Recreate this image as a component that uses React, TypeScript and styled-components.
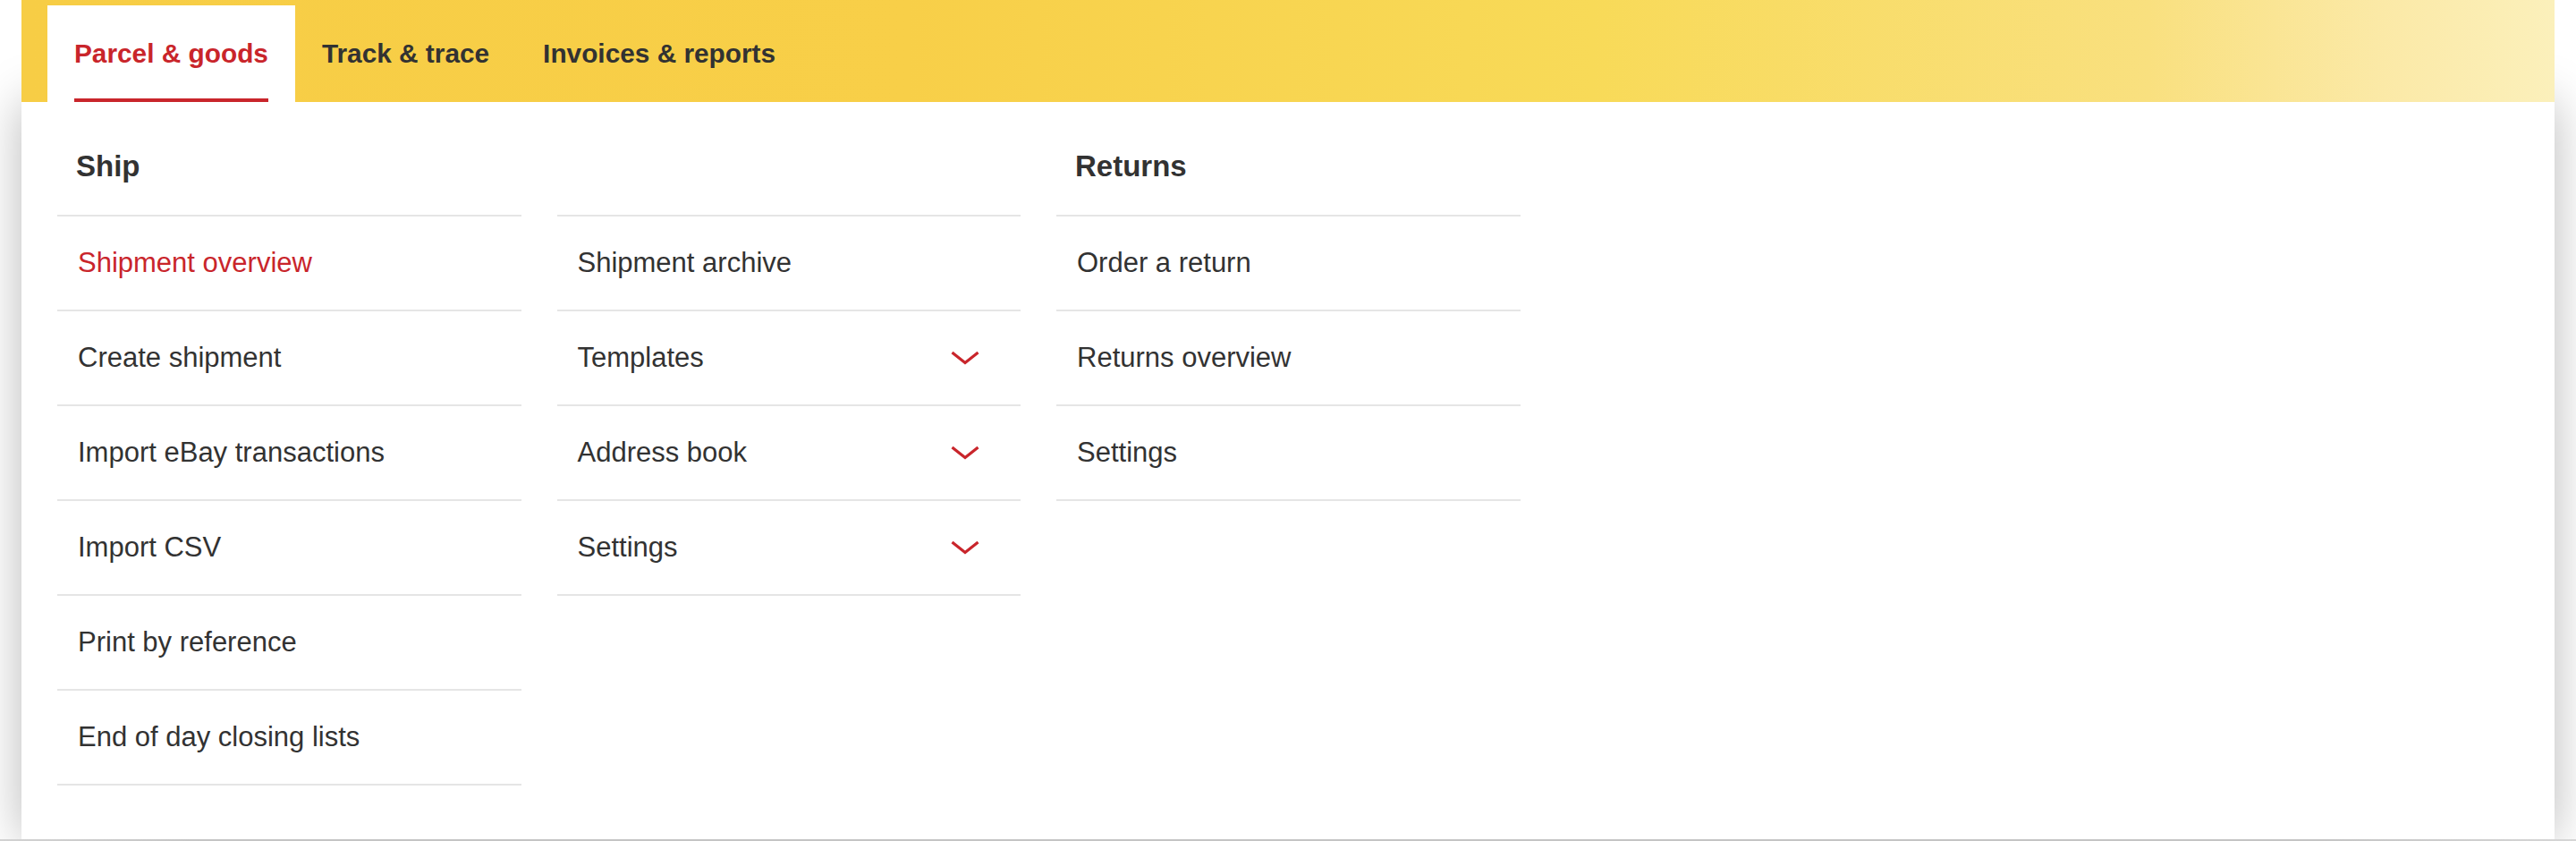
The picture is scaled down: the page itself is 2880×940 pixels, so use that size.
import React from "react";
import styled, { createGlobalStyle } from "styled-components";

const GlobalStyle = createGlobalStyle`
  html, body {
    margin: 0;
    padding: 0;
    background: #ffffff;
    overflow: hidden;
  }
  body {
    font-family: "Liberation Sans", Arial, Helvetica, sans-serif;
    color: #323232;
    -webkit-font-smoothing: antialiased;
  }
  * { box-sizing: border-box; }
`;

const RED = "#c9252b";
const TEXT = "#323232";
const LINE = "#e5e5e5";

const Page = styled.div`
  width: 2880px;
  height: 940px;
  display: flex;
  flex-direction: column;
  background: #ffffff;
`;

const TabBar = styled.nav`
  position: relative;
  z-index: 1;
  margin: 0 24px;
  height: 114px;
  flex: none;
  display: flex;
  align-items: flex-end;
  padding-left: 29px;
  background: linear-gradient(
    90deg,
    #f7cd45 0%,
    #f8cf48 35%,
    #f8da58 62%,
    #f9e07f 84%,
    #fbe9a6 93%,
    #fbf0bb 100%
  );
`;

const Tab = styled.a<{ $active?: boolean }>`
  height: 108px;
  padding: 0 30px;
  display: flex;
  background: ${(p) => (p.$active ? "#ffffff" : "transparent")};
  color: ${(p) => (p.$active ? RED : TEXT)};
  font-size: 29.8px;
  font-weight: 700;
  text-decoration: none;
  white-space: nowrap;
  cursor: pointer;
`;

const TabLabel = styled.span<{ $active?: boolean }>`
  display: flex;
  align-items: center;
  padding-top: 4px;
  border-bottom: 4px solid ${(p) => (p.$active ? RED : "transparent")};
`;

const Panel = styled.section`
  margin: 0 24px;
  height: 824px;
  flex: none;
  background: #ffffff;
  box-shadow: 0 0 52px rgba(0, 0, 0, 0.28);
  display: grid;
  grid-template-columns: repeat(3, 518.5px);
  column-gap: 40px;
  align-content: start;
  padding-left: 40px;
`;

const Column = styled.div`
  display: flex;
  flex-direction: column;
`;

const Heading = styled.h3`
  margin: 0;
  height: 126px;
  padding: 52px 0 0 21px;
  font-size: 33px;
  line-height: 40px;
  font-weight: 700;
  color: ${TEXT};
`;

const List = styled.ul`
  list-style: none;
  margin: 0;
  padding: 0;
  border-bottom: 2px solid ${LINE};
`;

const Item = styled.li<{ $active?: boolean }>`
  height: 106px;
  border-top: 2px solid ${LINE};
  display: flex;
  align-items: center;
  justify-content: space-between;
  padding: 0 46px 0 23px;
  font-size: 31px;
  color: ${(p) => (p.$active ? RED : TEXT)};
  white-space: nowrap;
  cursor: pointer;
`;

const Chevron = styled.svg`
  width: 32px;
  height: 18px;
  flex: none;
`;

const BelowStrip = styled.div`
  height: 2px;
  flex: none;
  background: linear-gradient(90deg, #d2d2d2 0%, #c4c4c4 8%, #c4c4c4 90%, #d6d6d6 100%);
`;

type Entry = { label: string; active?: boolean; expandable?: boolean };

const columns: { heading: string; items: Entry[] }[] = [
  {
    heading: "Ship",
    items: [
      { label: "Shipment overview", active: true },
      { label: "Create shipment" },
      { label: "Import eBay transactions" },
      { label: "Import CSV" },
      { label: "Print by reference" },
      { label: "End of day closing lists" },
    ],
  },
  {
    heading: "",
    items: [
      { label: "Shipment archive" },
      { label: "Templates", expandable: true },
      { label: "Address book", expandable: true },
      { label: "Settings", expandable: true },
    ],
  },
  {
    heading: "Returns",
    items: [
      { label: "Order a return" },
      { label: "Returns overview" },
      { label: "Settings" },
    ],
  },
];

const tabs = [
  { label: "Parcel & goods", active: true },
  { label: "Track & trace" },
  { label: "Invoices & reports" },
];

const ChevronDown = () => (
  <Chevron viewBox="0 0 32 18" aria-hidden="true">
    <path
      d="M1.5 3 L16 14.5 L30.5 3"
      fill="none"
      stroke={RED}
      strokeWidth={3.2}
      strokeLinejoin="miter"
    />
  </Chevron>
);

export default function App() {
  return (
    <>
      <GlobalStyle />
      <Page>
        <TabBar>
          {tabs.map((t) => (
            <Tab key={t.label} $active={t.active}>
              <TabLabel $active={t.active}>{t.label}</TabLabel>
            </Tab>
          ))}
        </TabBar>
        <Panel>
          {columns.map((col, i) => (
            <Column key={i}>
              <Heading>{col.heading}</Heading>
              <List>
                {col.items.map((it) => (
                  <Item key={it.label} $active={it.active}>
                    <span>{it.label}</span>
                    {it.expandable && <ChevronDown />}
                  </Item>
                ))}
              </List>
            </Column>
          ))}
        </Panel>
        <BelowStrip />
      </Page>
    </>
  );
}
